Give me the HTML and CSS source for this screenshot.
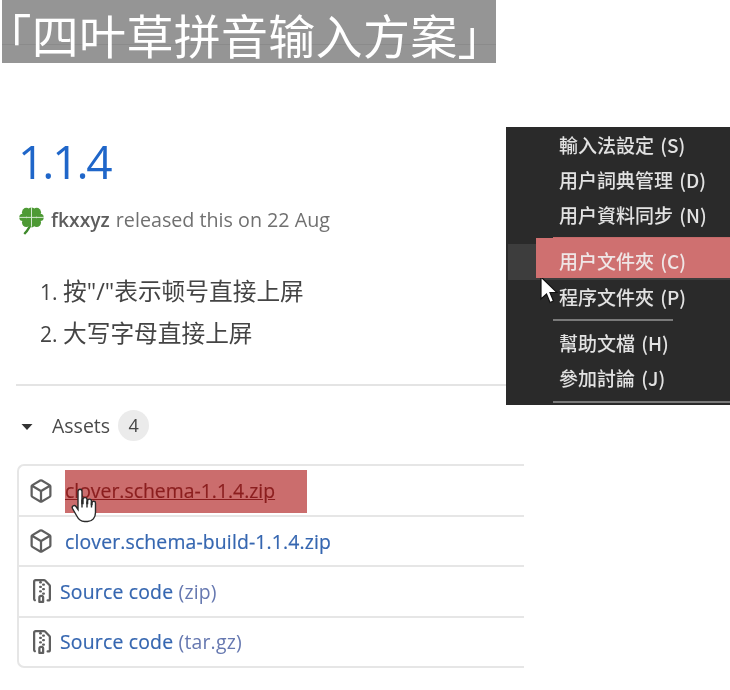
FILE: index.html
```html
<!DOCTYPE html>
<html lang="zh">
<head>
<meta charset="utf-8">
<title>四叶草拼音输入方案</title>
<link rel="stylesheet" href="styles.css">
</head>
<body>
<div class="stage">
  <h1 class="banner">「四叶草拼音输入方案」</h1>
  <main class="release">
    <h2 class="version">1.1.4</h2>
    <div class="byline">
      <svg class="clover" viewBox="0 0 24 28" aria-hidden="true">
        <path class="stem" d="M12 14 Q11 21 5 27" />
        <g class="leaf"><circle cx="7" cy="6" r="4.2"/><circle cx="12" cy="4.6" r="3.2"/><circle cx="17" cy="6" r="4.2"/><circle cx="3.600" cy="11" r="3.400"/><circle cx="20.400" cy="11" r="3.400"/><circle cx="7" cy="16" r="4.2"/><circle cx="17" cy="16" r="4.2"/><circle cx="12" cy="17.500" r="3"/><circle cx="12" cy="11" r="5"/></g>
        <path class="vein" d="M12 11V1M12 11v9M12 11H0M12 11h12"/>
      </svg>
      <b class="author">fkxxyz</b>
      <span class="released">released this on 22 Aug</span>
    </div>
    <ol class="notes">
      <li>按"/"表示顿号直接上屏</li>
      <li>大写字母直接上屏</li>
    </ol>
    <hr class="rule">
    <div class="assets-head">
      <svg class="caret" viewBox="0 0 12 8" aria-hidden="true"><path d="M0.5 1h11L6 7z"/></svg>
      <span class="assets-title">Assets</span>
      <span class="count">4</span>
    </div>
    <ul class="assets">
      <li class="asset">
        <svg class="ico" viewBox="0 0 16 16" aria-hidden="true"><path d="m8.878.392 5.25 3.045c.54.314.872.89.872 1.514v6.098a1.75 1.75 0 0 1-.872 1.514l-5.25 3.045a1.75 1.75 0 0 1-1.756 0l-5.25-3.045A1.75 1.75 0 0 1 1 11.049V4.951c0-.624.332-1.201.872-1.514L7.122.392a1.75 1.75 0 0 1 1.756 0ZM7.875 1.69l-4.63 2.685L8 7.133l4.755-2.758-4.63-2.685a.248.248 0 0 0-.25 0ZM2.5 5.677v5.372c0 .09.047.171.125.216l4.625 2.683V8.432Zm6.25 8.271 4.625-2.683a.25.25 0 0 0 .125-.216V5.677L8.75 8.432Z"/></svg>
        <a class="link hovered" href="#">clover.schema-1.1.4.zip</a>
      </li>
      <li class="asset">
        <svg class="ico" viewBox="0 0 16 16" aria-hidden="true"><path d="m8.878.392 5.25 3.045c.54.314.872.89.872 1.514v6.098a1.75 1.75 0 0 1-.872 1.514l-5.25 3.045a1.75 1.75 0 0 1-1.756 0l-5.25-3.045A1.75 1.75 0 0 1 1 11.049V4.951c0-.624.332-1.201.872-1.514L7.122.392a1.75 1.75 0 0 1 1.756 0ZM7.875 1.69l-4.63 2.685L8 7.133l4.755-2.758-4.63-2.685a.248.248 0 0 0-.25 0ZM2.5 5.677v5.372c0 .09.047.171.125.216l4.625 2.683V8.432Zm6.25 8.271 4.625-2.683a.25.25 0 0 0 .125-.216V5.677L8.75 8.432Z"/></svg>
        <a class="link wide" href="#">clover.schema-build-1.1.4.zip</a>
      </li>
      <li class="asset source">
        <svg class="ico" viewBox="0 0 16 16" aria-hidden="true"><path d="M3.5 1.75v11.5c0 .09.048.173.126.217a.75.75 0 0 1-.752 1.298A1.748 1.748 0 0 1 2 13.25V1.75C2 .784 2.784 0 3.75 0h5.586c.464 0 .909.185 1.237.513l2.914 2.914c.329.328.513.773.513 1.237v8.586A1.75 1.75 0 0 1 12.25 15h-.5a.75.75 0 0 1 0-1.5h.5a.25.25 0 0 0 .25-.25V4.664a.25.25 0 0 0-.073-.177L9.513 1.573a.25.25 0 0 0-.177-.073H7.25a.75.75 0 0 1 0 1.5h-.5a.75.75 0 0 1 0-1.5h-3a.25.25 0 0 0-.25.25Zm3.75 8.75h.5c.966 0 1.75.784 1.75 1.750v3a.75.75 0 0 1-.75.75h-2.5a.75.75 0 0 1-.75-.75v-3c0-.966.784-1.75 1.75-1.75ZM6 5.25a.75.75 0 0 1 .75-.75h.5a.75.75 0 0 1 0 1.5h-.5A.75.75 0 0 1 6 5.25Zm.75 2.25h.5a.75.75 0 0 1 0 1.5h-.5a.75.75 0 0 1 0-1.5ZM8 6.75A.75.75 0 0 1 8.75 6h.5a.75.75 0 0 1 0 1.5h-.5A.75.75 0 0 1 8 6.75ZM8.75 3h.5a.75.75 0 0 1 0 1.5h-.5a.75.75 0 0 1 0-1.5ZM8 9.75A.75.75 0 0 1 8.75 9h.5a.75.75 0 0 1 0 1.5h-.5A.75.75 0 0 1 8 9.75Zm-1 2.5v2.25h1v-2.25a.25.25 0 0 0-.25-.25h-.5a.25.25 0 0 0-.25.25Z"/></svg>
        <a class="link" href="#">Source code <span class="muted">(zip)</span></a>
      </li>
      <li class="asset source">
        <svg class="ico" viewBox="0 0 16 16" aria-hidden="true"><path d="M3.5 1.75v11.5c0 .09.048.173.126.217a.75.75 0 0 1-.752 1.298A1.748 1.748 0 0 1 2 13.25V1.75C2 .784 2.784 0 3.75 0h5.586c.464 0 .909.185 1.237.513l2.914 2.914c.329.328.513.773.513 1.237v8.586A1.75 1.75 0 0 1 12.25 15h-.5a.75.75 0 0 1 0-1.5h.5a.25.25 0 0 0 .25-.25V4.664a.25.25 0 0 0-.073-.177L9.513 1.573a.25.25 0 0 0-.177-.073H7.25a.75.75 0 0 1 0 1.5h-.5a.75.75 0 0 1 0-1.5h-3a.25.25 0 0 0-.25.25Zm3.75 8.75h.5c.966 0 1.75.784 1.75 1.750v3a.75.75 0 0 1-.75.75h-2.5a.75.75 0 0 1-.75-.75v-3c0-.966.784-1.75 1.75-1.75ZM6 5.25a.75.75 0 0 1 .75-.75h.5a.75.75 0 0 1 0 1.5h-.5A.75.75 0 0 1 6 5.25Zm.75 2.25h.5a.75.75 0 0 1 0 1.5h-.5a.75.75 0 0 1 0-1.5ZM8 6.75A.75.75 0 0 1 8.75 6h.5a.75.75 0 0 1 0 1.5h-.5A.75.75 0 0 1 8 6.75ZM8.75 3h.5a.75.75 0 0 1 0 1.5h-.5a.75.75 0 0 1 0-1.5ZM8 9.75A.75.75 0 0 1 8.75 9h.5a.75.75 0 0 1 0 1.5h-.5A.75.75 0 0 1 8 9.75Zm-1 2.5v2.25h1v-2.25a.25.25 0 0 0-.25-.25h-.5a.25.25 0 0 0-.25.25Z"/></svg>
        <a class="link" href="#">Source code <span class="muted">(tar.gz)</span></a>
      </li>
    </ul>
  </main>

  <div class="overlay-link"></div>
  <svg class="hand" viewBox="0 0 28 36" aria-hidden="true"><path d="M7 3c0-3 4-3 4 0v12l1 0V11c0-2.500 4-2.500 4 0v4h.6v-2.500c0-2.500 3.800-2.500 3.800 0V16h.6v-1.500c0-2.300 3.500-2.300 3.500 0V24c0 5-3 9-8 9h-3c-4 0-6-2-8-6l-4-7c-1.200-2.500 1.800-4 3.500-2L7 21z"/><path class="hand-line" d="M11 11v8M16 13v6M20.500 14v5"/></svg>

  <nav class="menu">
    <div class="menu-item">輸入法設定 (S)</div>
    <div class="menu-item">用戶詞典管理 (D)</div>
    <div class="menu-item">用戶資料同步 (N)</div>
    <div class="menu-sep first"></div>
    <div class="menu-item active">用戶文件夾 (C)</div>
    <div class="menu-item">程序文件夾 (P)</div>
    <div class="menu-sep"></div>
    <div class="menu-item">幫助文檔 (H)</div>
    <div class="menu-item">參加討論 (J)</div>
    <div class="menu-sep last"></div>
    <div class="menu-hover"></div>
    <div class="menu-mark"></div>
  </nav>
  <svg class="pointer" viewBox="0 0 18 28" aria-hidden="true"><path d="M1 1v22l5.500-5 3.500 8.500 3.500-1.500-3.500-8.500H17z"/></svg>
</div>
</body>
</html>
```
FILE: styles.css
```css
* { box-sizing: border-box; }
html, body { margin: 0; padding: 0; background: #fff; }
.stage {
  position: relative;
  width: 730px;
  height: 690px;
  overflow: hidden;
  font-family: "Open Sans", "Noto Sans CJK SC", sans-serif;
  color: #5c5c5c;
  filter: blur(.35px);
}
.banner {
  margin: 0 0 0 2px;
  padding-left: 6px;
  width: 494px;
  height: 63px;
  background: linear-gradient(#959595 44px, #8b8b8b 44px, #8b8b8b 45px, #959595 45px);
  color: #fff;
  font: 400 47px/68px "Noto Sans CJK SC", sans-serif;
  font-feature-settings: "halt";
  letter-spacing: .3px;
  white-space: nowrap;
}
.release { padding: 0 0 0 17px; width: 524px; }
.version {
  margin: 71px 0 0 1px;
  height: 58px;
  font: 400 46px/54px "Open Sans", sans-serif;
  letter-spacing: -2.1px;
  color: #1f66c9;
}
.byline {
  margin: 13px 0 0 2px;
  height: 30px;
  display: flex;
  align-items: center;
  font-size: 19.3px;
  line-height: 30px;
  white-space: nowrap;
  color: #707070;
}
.released { font-size: 19.7px; }
.clover { width: 25px; height: 29px; margin-right: 7px; }
.clover .stem { fill: none; stroke: #3f8a2c; stroke-width: 2.2; }
.clover .leaf { fill: #4e9a35; }
.clover .vein { fill: none; stroke: #dfeedd; stroke-width: .9; }
.author { font-weight: 600; color: #5d5d5d; margin-right: 6px; }
.notes {
  margin: 35px 0 0;
  padding: 0 0 0 46px;
  font: 400 23.7px/42px "Open Sans", "Noto Sans CJK SC", sans-serif;
  color: #444;
}
.notes li { height: 42px; }
.notes li::marker { font-size: 21px; }
.rule { margin: 30px 0 0 -1px; height: 0; border: 0; border-top: 2px solid #e4e4e4; width: 490px; }
.assets-head { margin-top: 21px; height: 36px; display: flex; align-items: center; }
.caret { width: 12px; height: 8px; fill: #333; margin: 4px 0 0 4px; }
.assets-title { margin-left: 19px; font-size: 19.5px; color: #4a4a4a; }
.count {
  margin-left: 8px;
  width: 31px; height: 31px;
  border-radius: 50%;
  background: #ebebeb;
  display: flex; align-items: center; justify-content: center;
  font-size: 18px; color: #444;
}
.assets {
  list-style: none;
  margin: 21px 0 0;
  padding: 0;
  border: 2px solid #e6e6e6;
  border-right: 0;
  border-radius: 7px 0 0 7px;
  font-size: 19.4px;
}
.asset {
  height: 50.3px;
  display: flex;
  align-items: center;
  padding-left: 10px;
  border-top: 2px solid #e6e6e6;
}
.asset:first-child { border-top: 0; height: 49px; }
.ico { width: 24px; height: 24px; fill: #5f5f5f; margin-right: 12px; flex: none; }
.source { padding-left: 11px; }
.source .ico { margin: 0 6px 0 0; }
.source .link { letter-spacing: .2px; }
.link { color: #3566b0; text-decoration: none; font-weight: 500; white-space: nowrap; -webkit-text-stroke: .2px currentColor; }
.link.wide { letter-spacing: .15px; }
.hovered { text-decoration: underline; color: #38090a; }
.muted { color: #6678b0; font-weight: 400; -webkit-text-stroke: 0; }
.overlay-link {
  position: absolute;
  left: 65px; top: 470px;
  width: 242px; height: 43px;
  background: rgba(178, 40, 40, .68);
}
.hand { position: absolute; left: 71px; top: 488px; width: 28px; height: 37px; fill: #fff; stroke: #2a2a2a; stroke-width: 1.4; }
.hand-line { fill: none; }
.menu {
  position: absolute;
  left: 506px; top: 127px;
  width: 224px; height: 278px;
  background: #2a2a2a;
  color: #e2e2e2;
  font: 500 19px/35px "Noto Sans CJK TC", sans-serif;
}
.menu-item { height: 35px; padding-left: 53px; white-space: nowrap; position: relative; z-index: 2; word-spacing: 2px; }
.menu-sep { height: 2px; margin: 5px 0 4px 47px; width: 120px; background: #7a7a7a; }
.menu-sep.first { width: auto; background: #c46a6a; }
.menu-sep.last { width: auto; margin-top: 6px; }
.menu-item.active { height: 36px; color: #efe6e6; }
.menu-hover { position: absolute; left: 2px; top: 117px; width: 222px; height: 36px; background: #3d3d3d; }
.menu-mark { position: absolute; left: 30px; top: 111px; width: 194px; height: 40px; background: #cf7070; z-index: 1; }
.pointer { position: absolute; left: 540px; top: 276px; width: 18px; height: 28px; fill: #fff; stroke: #111; stroke-width: 1.2; }
```
